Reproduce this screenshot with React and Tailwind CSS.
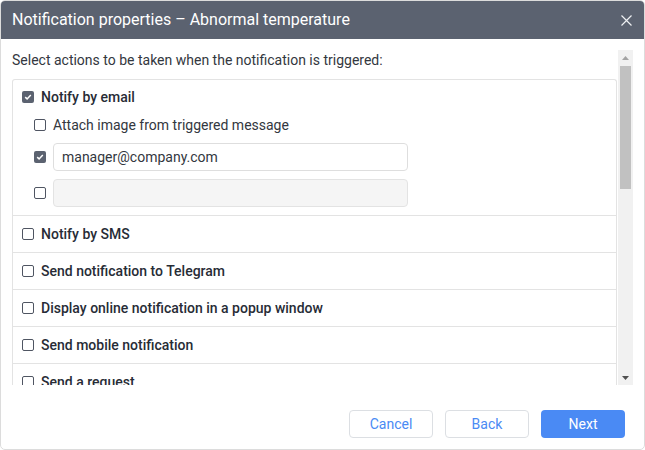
import React from "react";

function Box({ checked }) {
  return checked ? (
    <span className="w-[12px] h-[12px] rounded-[2px] bg-[#5b6270] flex items-center justify-center shrink-0">
      <svg width="8" height="8" viewBox="0 0 8 8">
        <path d="M1.2 4.1 L3.1 5.9 L6.8 2.1" stroke="white" strokeWidth="1.5" fill="none" />
      </svg>
    </span>
  ) : (
    <span className="w-[12px] h-[12px] rounded-[2px] border border-[#4f5562] bg-white shrink-0" />
  );
}

function Row({ label }) {
  return (
    <div className="h-[37px] border-b border-[#e3e3e3] flex items-center gap-[7px] pl-[9px]">
      <Box />
      <span className="text-[14px] font-medium text-[#272c36]">{label}</span>
    </div>
  );
}

export default function App() {
  return (
    <div className="w-[645px] h-[450px] flex flex-col bg-white border border-[#dcdcdc] rounded-[5px] overflow-hidden font-['Roboto',sans-serif]">
      <div className="h-[38px] shrink-0 bg-[#5b6270] flex items-center justify-between pl-[11px] pr-[12px]">
        <span className="text-white text-[16px] leading-[20px]">Notification properties – Abnormal temperature</span>
        <svg width="11" height="11" viewBox="0 0 11 11">
          <path d="M0.5 0.5 L10.5 10.5 M10.5 0.5 L0.5 10.5" stroke="#eef0f3" strokeWidth="1.2" />
        </svg>
      </div>
      <div className="mt-[11px] h-[335px] shrink-0 flex pl-[11px] pr-[11px]">
        <div className="flex-1 overflow-hidden">
          <div className="h-[20px] leading-[20px] text-[14px] text-[#333740]">
            Select actions to be taken when the notification is triggered:
          </div>
          <div className="mt-[9px] mr-[1px] border border-b-0 border-[#e3e3e3] rounded-t-[3px]">
            <div className="border-b border-[#e3e3e3] pt-[7px] pb-[8px]">
              <div className="h-[20px] flex items-center gap-[7px] pl-[9px]">
                <Box checked />
                <span className="text-[14px] font-medium text-[#272c36]">Notify by email</span>
              </div>
              <div className="mt-[8px] h-[20px] flex items-center gap-[7px] pl-[21px]">
                <Box />
                <span className="text-[14px] text-[#333740]">Attach image from triggered message</span>
              </div>
              <div className="mt-[8px] flex items-center gap-[7px] pl-[21px]">
                <Box checked />
                <div className="w-[355px] h-[28px] border border-[#dedede] rounded-[4px] bg-white flex items-center pl-[8px] text-[14px] text-[#333740]">
                  manager@company.com
                </div>
              </div>
              <div className="mt-[8px] flex items-center gap-[7px] pl-[21px]">
                <Box />
                <div className="w-[355px] h-[28px] border border-[#e3e3e3] rounded-[4px] bg-[#f5f5f5]" />
              </div>
            </div>
            <Row label="Notify by SMS" />
            <Row label="Send notification to Telegram" />
            <Row label="Display online notification in a popup window" />
            <Row label="Send mobile notification" />
            <Row label="Send a request" />
          </div>
        </div>
        <div className="w-[15px] shrink-0 bg-[#f1f1f1] flex flex-col">
          <div className="h-[15px] flex items-center justify-center">
            <svg width="7" height="4" viewBox="0 0 7 4"><path d="M0 4 L3.5 0 L7 4 Z" fill="#a3a3a3" /></svg>
          </div>
          <div className="mx-[2px] mt-[1px] h-[123px] bg-[#c1c1c1]" />
          <div className="flex-1" />
          <div className="h-[15px] flex items-center justify-center">
            <svg width="7" height="4" viewBox="0 0 7 4"><path d="M0 0 L3.5 4 L7 0 Z" fill="#505050" /></svg>
          </div>
        </div>
      </div>
      <div className="flex-1 flex items-end justify-end gap-[12px] pr-[19px] pb-[11px]">
        <button className="w-[84px] h-[28px] rounded-[4px] border border-[#dcdfe3] bg-white text-[14px] text-[#4a8af4]">Cancel</button>
        <button className="w-[84px] h-[28px] rounded-[4px] border border-[#dcdfe3] bg-white text-[14px] text-[#4a8af4]">Back</button>
        <button className="w-[84px] h-[28px] rounded-[4px] bg-[#4a8af4] text-[14px] text-white">Next</button>
      </div>
    </div>
  );
}
